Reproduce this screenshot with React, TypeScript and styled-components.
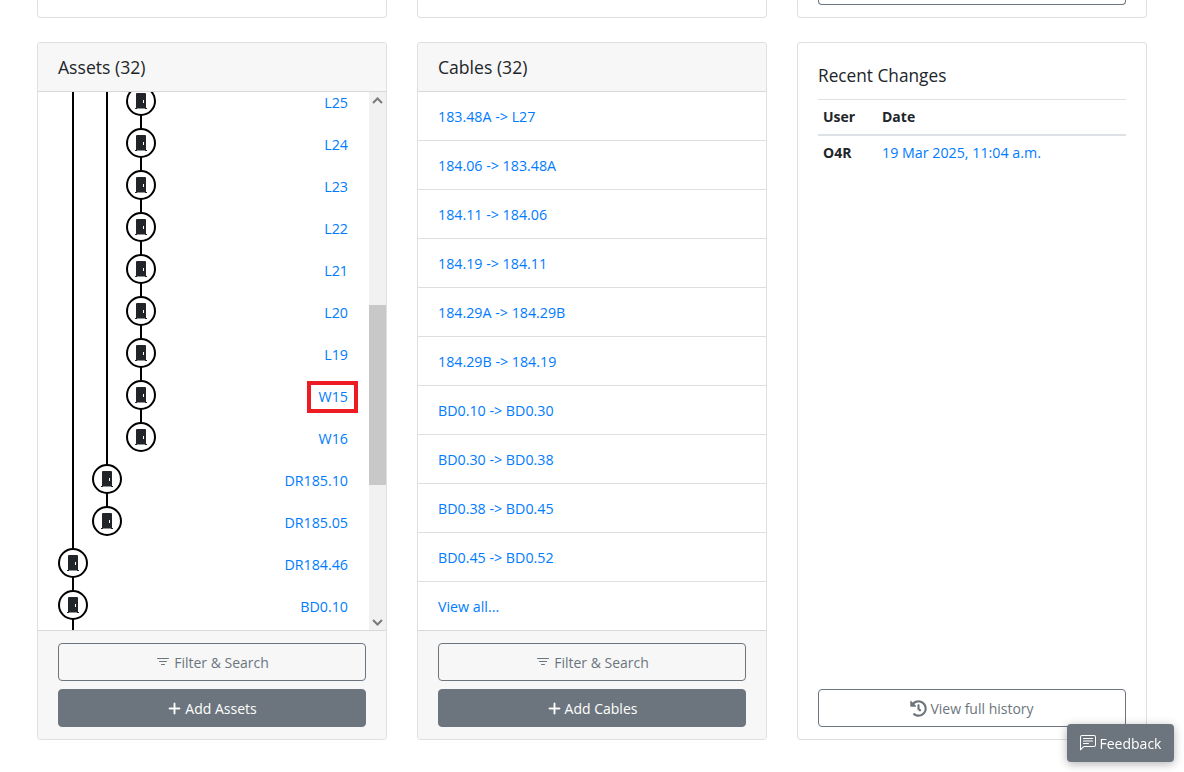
import React from "react";
import styled, { createGlobalStyle } from "styled-components";
import { BsFilter, BsPlusLg, BsChatLeftText } from "react-icons/bs";
import { FaHistory } from "react-icons/fa";

const Global = createGlobalStyle`
  html, body { margin: 0; padding: 0; height: 772px; overflow: hidden; background: #fff; }
  body { font-family: "Open Sans", "Noto Sans", "Liberation Sans", sans-serif; font-size: 14px; color: #212529; }
  *, *::before, *::after { box-sizing: border-box; }
`;

const Page = styled.div`
  display: flex;
  flex-direction: column;
  gap: 24px;
  padding: 0 37px;
`;
const Row = styled.div`
  display: grid;
  grid-template-columns: repeat(3, 350px);
  gap: 30px;
`;
const StubCard = styled.div`
  height: 18px;
  background: #fff;
  border: 1px solid rgba(0, 0, 0, 0.125);
  border-top: none;
  border-radius: 0 0 4px 4px;
  padding: 0 20px;
`;
const StubButton = styled.div`
  height: 5px;
  border: 1px solid #6c757d;
  border-top: none;
  border-radius: 0 0 4px 4px;
`;
const Card = styled.section`
  height: 698px;
  display: flex;
  flex-direction: column;
  background: #fff;
  border: 1px solid rgba(0, 0, 0, 0.125);
  border-radius: 4px;
  overflow: hidden;
`;
const CardHeader = styled.h5`
  margin: 0;
  height: 49px;
  flex: none;
  display: flex;
  align-items: center;
  padding: 0 20px;
  font-size: 17.6px;
  font-weight: 400;
  background: #f7f7f7;
  border-bottom: 1px solid rgba(0, 0, 0, 0.125);
`;
const CardBody = styled.div`
  flex: 1;
  min-height: 0;
  display: flex;
`;
const CardFooter = styled.div`
  flex: none;
  height: 109px;
  padding: 12px 20px;
  display: flex;
  flex-direction: column;
  gap: 8px;
  background: #f7f7f7;
  border-top: 1px solid rgba(0, 0, 0, 0.125);
`;
const Button = styled.button<{ $solid?: boolean }>`
  height: 38px;
  flex: none;
  width: 100%;
  display: flex;
  align-items: center;
  justify-content: center;
  gap: 3px;
  font: inherit;
  font-size: 14px;
  border-radius: 4px;
  border: 1px solid #6c757d;
  background: ${(p) => (p.$solid ? "#6c757d" : "transparent")};
  color: ${(p) => (p.$solid ? "#fff" : "#6c757d")};
`;
const Tree = styled.div`
  flex: 1;
  min-width: 0;
  overflow: hidden;
  position: relative;
  display: flex;
`;
const TreeInner = styled.div`
  flex: 1;
  display: flex;
  margin-top: -12px;
`;
const TreeDrawing = styled.svg`
  flex: none;
  display: block;
`;
const Labels = styled.div`
  flex: 1;
  display: flex;
  flex-direction: column;
  align-items: flex-end;
  padding-right: 21px;
`;
const Label = styled.a<{ $marked?: boolean }>`
  height: 42px;
  padding-top: 2px;
  display: flex;
  align-items: center;
  font-size: 14.25px;
  color: #007bff;
  position: relative;
  ${(p) =>
    p.$marked &&
    `&::after {
      content: "";
      position: absolute;
      left: -12px;
      right: -10px;
      top: 7px;
      height: 32px;
      border: 4.5px solid #ed1c24;
    }`}
`;
const Scrollbar = styled.div`
  flex: none;
  width: 17px;
  background: #f1f1f1;
  display: flex;
  flex-direction: column;
`;
const ScrollArrow = styled.div`
  height: 17px;
  flex: none;
  display: flex;
  align-items: center;
  justify-content: center;
`;
const ScrollTrack = styled.div`
  flex: 1;
  padding-top: 196px;
`;
const ScrollThumb = styled.div`
  height: 180px;
  background: #c8c8c8;
`;
const CableList = styled.ul`
  flex: 1;
  margin: 0;
  padding: 0;
  list-style: none;
`;
const CableItem = styled.li`
  height: 49px;
  padding: 0 20px;
  display: flex;
  align-items: center;
  font-size: 14.25px;
  color: #007bff;
  border-bottom: 1px solid rgba(0, 0, 0, 0.125);
  &:last-child { border-bottom: none; }
`;
const HistoryBody = styled.div`
  flex: 1;
  display: flex;
  flex-direction: column;
  padding: 12px 20px;
`;
const HistoryTitle = styled.h5`
  margin: 0;
  height: 44px;
  padding-bottom: 4px;
  display: flex;
  align-items: center;
  font-size: 17.25px;
  font-weight: 400;
  flex: none;
`;
const TableRow = styled.div<{ $head?: boolean }>`
  display: grid;
  grid-template-columns: 59px 1fr;
  flex: none;
  height: ${(p) => (p.$head ? "37px" : "32px")};
  padding-bottom: ${(p) => (p.$head ? "2px" : "0")};
  align-items: center;
  border-top: ${(p) => (p.$head ? "1px solid #dee2e6" : "none")};
  border-bottom: ${(p) => (p.$head ? "2px solid #dee2e6" : "none")};
  font-weight: ${(p) => (p.$head ? 700 : 400)};
`;
const Cell = styled.span<{ $strong?: boolean; $link?: boolean }>`
  padding: 0 5px;
  font-weight: ${(p) => (p.$strong ? 700 : "inherit")};
  font-size: ${(p) => (p.$link ? "14.25px" : "inherit")};
  color: ${(p) => (p.$link ? "#007bff" : "inherit")};
`;
const Spacer = styled.div`
  flex: 1;
`;
const Feedback = styled.button`
  position: fixed;
  left: 1067px;
  top: 724px;
  width: 107px;
  height: 38px;
  display: flex;
  align-items: center;
  justify-content: center;
  gap: 4px;
  font: inherit;
  font-size: 14px;
  color: #fff;
  background: #6c757d;
  border: none;
  border-radius: 4px;
  box-shadow: 0 2px 10px rgba(0, 0, 0, 0.3);
`;
const BoldPlus = styled(BsPlusLg)`
  stroke: currentColor;
  stroke-width: 1;
`;

const labels = ["L25", "L24", "L23", "L22", "L21", "L20", "L19", "W15", "W16", "DR185.10", "DR185.05", "DR184.46", "BD0.10"];
const depths = [3, 3, 3, 3, 3, 3, 3, 3, 3, 2, 2, 1, 1];
const cables = [
  "183.48A -> L27", "184.06 -> 183.48A", "184.11 -> 184.06", "184.19 -> 184.11",
  "184.29A -> 184.29B", "184.29B -> 184.19", "BD0.10 -> BD0.30", "BD0.30 -> BD0.38",
  "BD0.38 -> BD0.45", "BD0.45 -> BD0.52", "View all...",
];
const columnX = (d: number) => 35 + (d - 1) * 34;
const door = "M-4 -8h8a1 1 0 0 1 1 1V7h1v1h-2v-.5h-8V8H-6V7h1V-7a1 1 0 0 1 1-1z";

function AssetTree() {
  const centerY = (i: number) => 21 + i * 42;
  return (
    <TreeDrawing width="130" height="580" viewBox="0 0 130 580">
      <g stroke="#000" strokeWidth="2" fill="none">
        <line x1={columnX(1)} y1="0" x2={columnX(1)} y2="580" />
        <line x1={columnX(2)} y1="0" x2={columnX(2)} y2={centerY(10)} />
        <line x1={columnX(3)} y1="0" x2={columnX(3)} y2={centerY(8)} />
      </g>
      {depths.map((d, i) => {
        const x = columnX(d);
        const y = centerY(i);
        return (
          <g key={i} transform={`translate(${x} ${y})`}>
            <circle r="14" fill="#fff" stroke="#000" strokeWidth="2" />
            <path d={door} fill="#212529" />
            <rect x="2" y="-1" width="1" height="3" fill="#fff" />
          </g>
        );
      })}
    </TreeDrawing>
  );
}

export default function App() {
  return (
    <Page>
      <Global />
      <Row>
        <StubCard />
        <StubCard />
        <StubCard>
          <StubButton />
        </StubCard>
      </Row>
      <Row>
        <Card>
          <CardHeader>Assets (32)</CardHeader>
          <CardBody>
            <Tree>
              <TreeInner>
                <AssetTree />
                <Labels>
                  {labels.map((l) => (
                    <Label key={l} $marked={l === "W15"}>{l}</Label>
                  ))}
                </Labels>
              </TreeInner>
            </Tree>
            <Scrollbar>
              <ScrollArrow>
                <svg width="11" height="8" viewBox="0 0 11 8"><path d="M1 6l4.5-4.5L10 6" fill="none" stroke="#7a7a7a" strokeWidth="2" /></svg>
              </ScrollArrow>
              <ScrollTrack><ScrollThumb /></ScrollTrack>
              <ScrollArrow>
                <svg width="11" height="8" viewBox="0 0 11 8"><path d="M1 2l4.5 4.5L10 2" fill="none" stroke="#7a7a7a" strokeWidth="2" /></svg>
              </ScrollArrow>
            </Scrollbar>
          </CardBody>
          <CardFooter>
            <Button><BsFilter size={16} /> Filter &amp; Search</Button>
            <Button $solid><BoldPlus size={15} /> Add Assets</Button>
          </CardFooter>
        </Card>
        <Card>
          <CardHeader>Cables (32)</CardHeader>
          <CardBody>
            <CableList>
              {cables.map((c) => <CableItem key={c}>{c}</CableItem>)}
            </CableList>
          </CardBody>
          <CardFooter>
            <Button><BsFilter size={16} /> Filter &amp; Search</Button>
            <Button $solid><BoldPlus size={15} /> Add Cables</Button>
          </CardFooter>
        </Card>
        <Card>
          <HistoryBody>
            <HistoryTitle>Recent Changes</HistoryTitle>
            <TableRow $head><Cell>User</Cell><Cell>Date</Cell></TableRow>
            <TableRow><Cell $strong>O4R</Cell><Cell $link>19 Mar 2025, 11:04 a.m.</Cell></TableRow>
            <Spacer />
            <Button><FaHistory size={17} /> View full history</Button>
          </HistoryBody>
        </Card>
      </Row>
      <Feedback><BsChatLeftText size={16} /> Feedback</Feedback>
    </Page>
  );
}
